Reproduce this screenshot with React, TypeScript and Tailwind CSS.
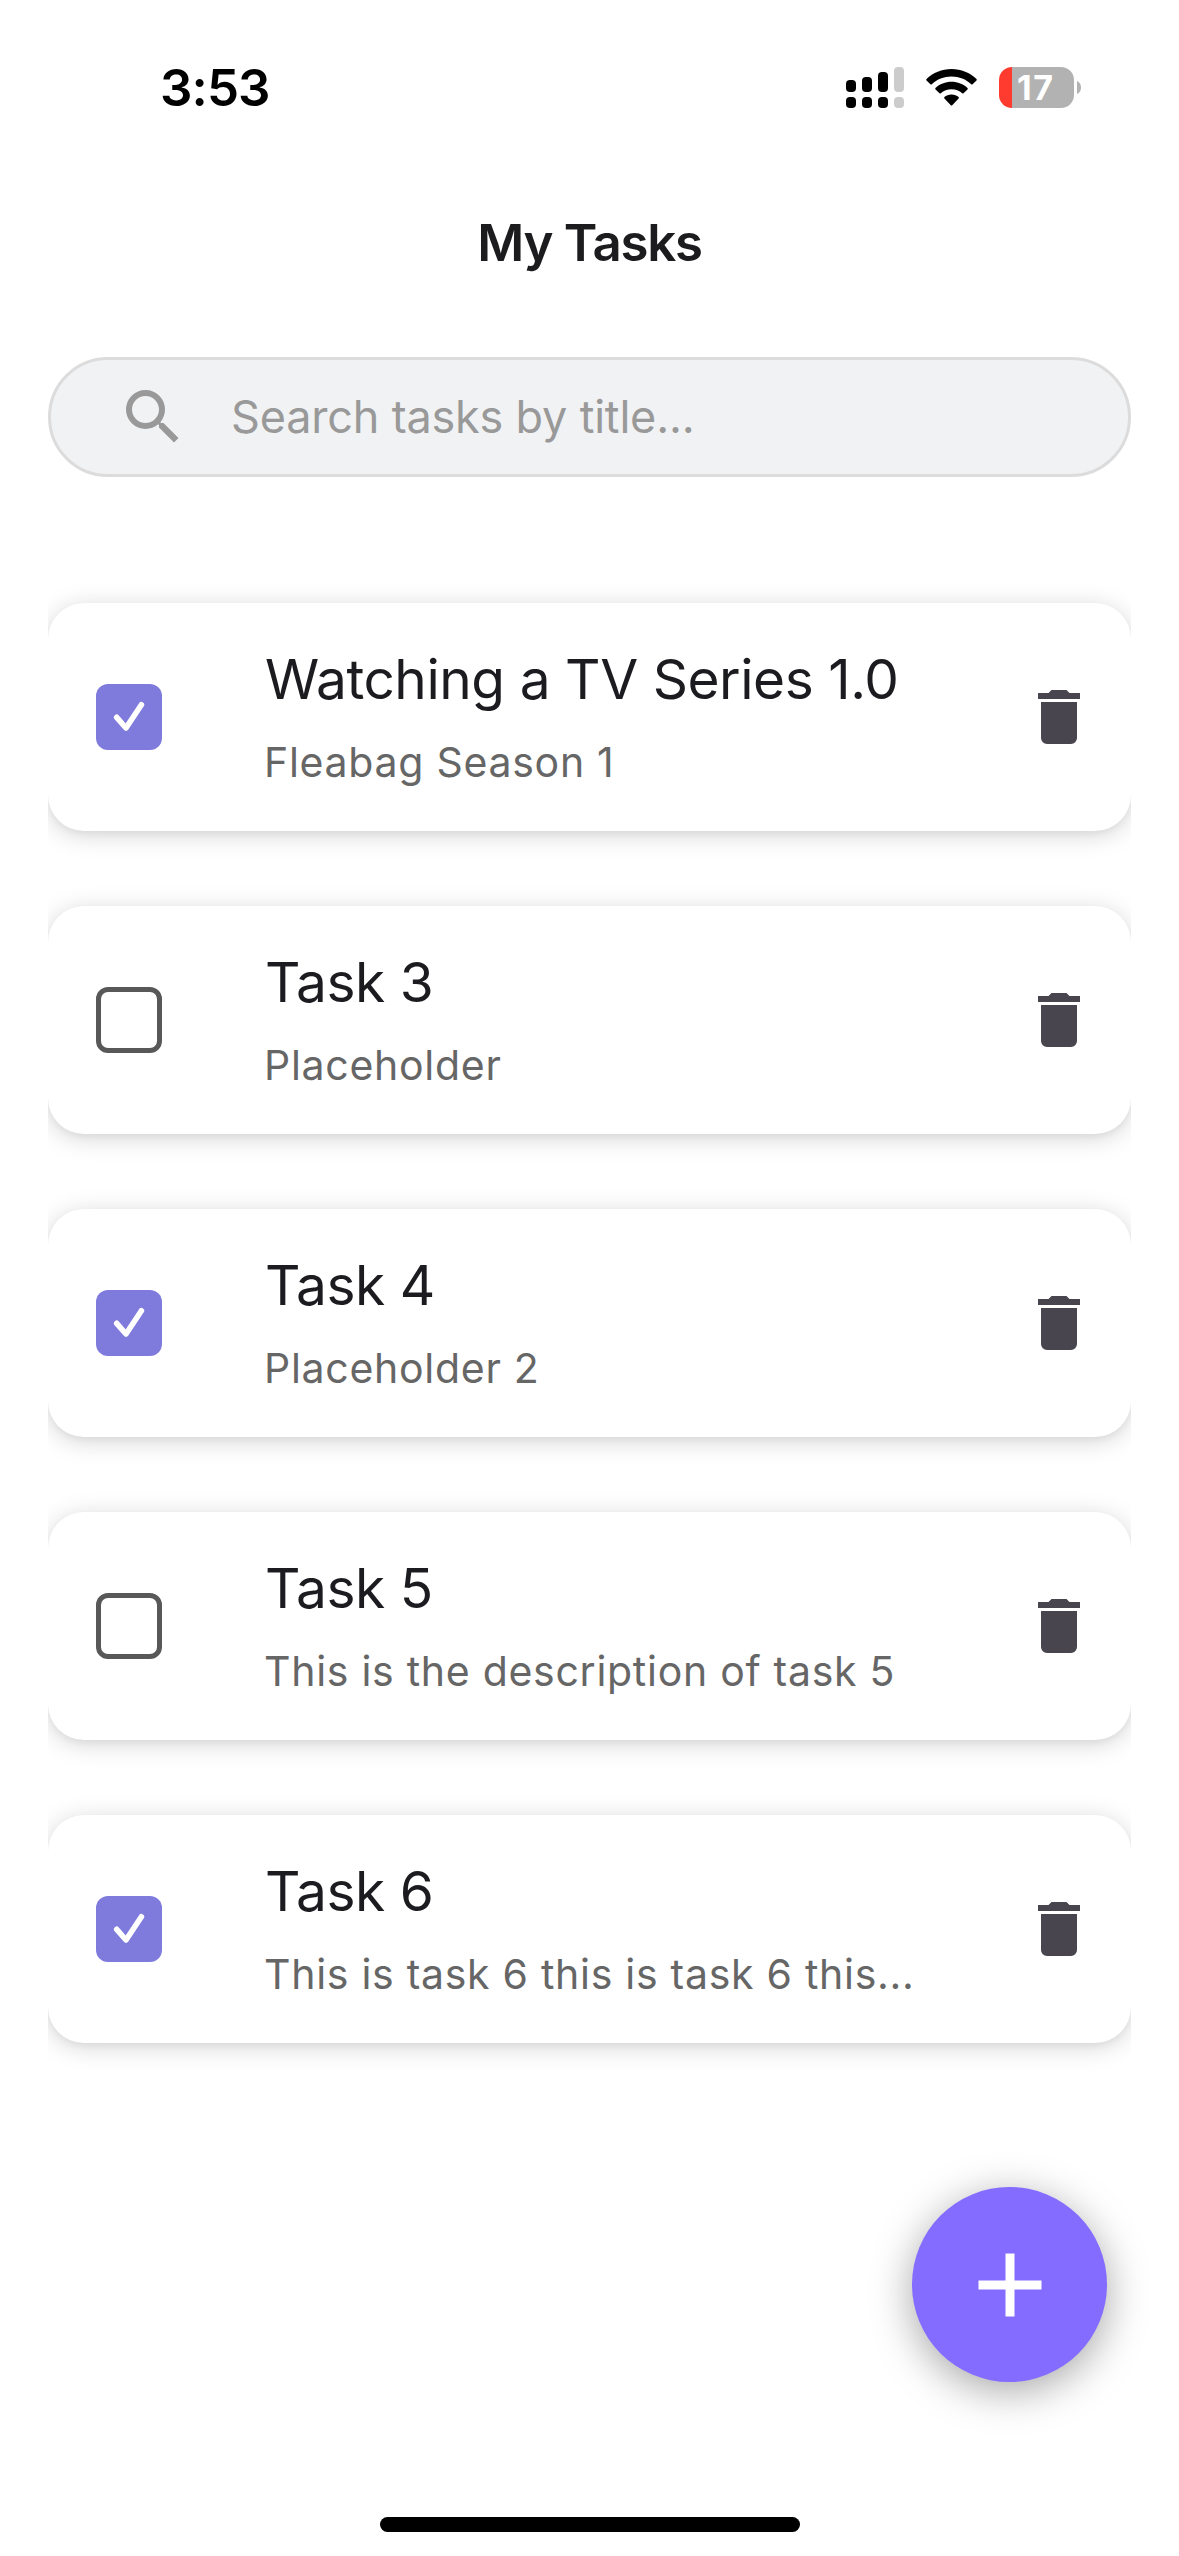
import { useState } from "react";

type Task = { id: number; title: string; description: string; done: boolean };

const initialTasks: Task[] = [
  { id: 1, title: "Watching a TV Series 1.0", description: "Fleabag Season 1", done: true },
  { id: 3, title: "Task 3", description: "Placeholder", done: false },
  { id: 4, title: "Task 4", description: "Placeholder 2", done: true },
  { id: 5, title: "Task 5", description: "This is the description of task 5", done: false },
  { id: 6, title: "Task 6", description: "This is task 6 this is task 6 this...", done: true },
];

function SignalIcon() {
  return (
    <svg width="58" height="41" viewBox="0 0 58 41">
      <rect x="0" y="13" width="10" height="12" rx="4" />
      <rect x="16" y="10" width="10" height="15" rx="4" />
      <rect x="32" y="5" width="10" height="20" rx="4" />
      <rect x="48" y="0" width="10" height="25" rx="4" fill="#cccccc" />
      <rect x="0" y="30" width="10" height="11" rx="4" />
      <rect x="16" y="30" width="10" height="11" rx="4" />
      <rect x="32" y="30" width="10" height="11" rx="4" />
      <rect x="48" y="30" width="10" height="11" rx="4" fill="#cccccc" />
    </svg>
  );
}

function WifiIcon() {
  return (
    <svg width="51" height="37" viewBox="0 0 51 37">
      <path d="M25.5 0C35.2 0 44 3.8 50.5 10C50.9 10.4 50.9 11 50.5 11.4L46.6 15.2C46.2 15.6 45.6 15.6 45.2 15.2C40 10.4 33.1 7.6 25.5 7.6C17.9 7.6 11 10.4 5.8 15.2C5.4 15.6 4.8 15.6 4.4 15.2L.5 11.4C.1 11 .1 10.4 .5 10C7 3.8 15.8 0 25.5 0Z" />
      <path d="M25.5 12.8C31.7 12.8 37.3 15.1 41.5 19C41.9 19.4 41.9 20 41.5 20.4L37.5 24.2C37.1 24.6 36.6 24.6 36.2 24.2C33.4 21.7 29.6 20.2 25.5 20.2C21.4 20.2 17.6 21.7 14.8 24.2C14.4 24.6 13.9 24.6 13.5 24.2L9.5 20.4C9.1 20 9.1 19.4 9.5 19C13.7 15.1 19.3 12.8 25.5 12.8Z" />
      <path d="M25.5 25.6C28.3 25.6 30.8 26.5 32.6 28.1C33 28.5 33 29.1 32.6 29.5L26.2 36.2C25.8 36.6 25.2 36.6 24.8 36.2L18.4 29.5C18 29.1 18 28.5 18.4 28.1C20.2 26.5 22.7 25.6 25.5 25.6Z" />
    </svg>
  );
}

function Battery() {
  return (
    <div className="flex items-center">
      <div className="flex h-[41px] w-[75px] items-center overflow-hidden rounded-[13px] bg-[linear-gradient(to_right,#ff3b30_13px,#b2b2b2_13px)] pl-[18px] text-[34px] leading-none font-bold tracking-[1.5px] text-white">
        17
      </div>
      <svg className="ml-[3px]" width="4" height="13" viewBox="0 0 4 13" fill="#b2b2b2">
        <path d="M0 0C2.5 1 4 3.5 4 6.5S2.5 12 0 13Z" />
      </svg>
    </div>
  );
}

function Checkbox({ checked, onToggle }: { checked: boolean; onToggle: () => void }) {
  return (
    <button type="button" role="checkbox" aria-checked={checked} onClick={onToggle} className="ml-12 size-[66px] shrink-0">
      {checked ? (
        <span className="block size-full rounded-xl bg-[#7f7bdd]">
          <svg viewBox="0 0 66 66" fill="none" stroke="#ffffff" strokeWidth="5.6" strokeLinecap="round" strokeLinejoin="round">
            <path d="M20.7 33.3L30 44L45.400 20.8" />
          </svg>
        </span>
      ) : (
        <span className="block size-full rounded-xl border-5 border-[#585858]" />
      )}
    </button>
  );
}

function TaskCard({ task, onToggle, onDelete }: { task: Task; onToggle: () => void; onDelete: () => void }) {
  return (
    <li className="flex h-[228px] items-center rounded-[36px] bg-white shadow-[0_4px_24px_rgba(0,0,0,0.17),0_3px_6px_rgba(0,0,0,0.04)]">
      <Checkbox checked={task.done} onToggle={onToggle} />
      <div className="ml-[102px] min-w-0 flex-1 pt-1.5 whitespace-nowrap">
        <h2 className="ml-px text-[55px] leading-[84px] tracking-[-0.45px] text-[#1c1b1f]">{task.title}</h2>
        <p className="text-[41px] leading-[82px] tracking-[0.72px] text-[#666666]">{task.description}</p>
      </div>
      <button type="button" aria-label="Delete" onClick={onDelete} className="mr-9 shrink-0">
        <svg width="72" height="72" viewBox="0 0 24 24" fill="#49454f">
          <path d="M19 4H15.5L14.5 3H9.5L8.5 4H5V6H19M6 19A2 2 0 0 0 8 21H16A2 2 0 0 0 18 19V7H6V19Z" />
        </svg>
      </button>
    </li>
  );
}

export default function App() {
  const [tasks, setTasks] = useState(initialTasks);
  const toggle = (id: number) => setTasks(tasks.map((t) => (t.id === id ? { ...t, done: !t.done } : t)));
  const remove = (id: number) => setTasks(tasks.filter((t) => t.id !== id));

  return (
    <div className="relative flex h-[2556px] w-[1179px] flex-col overflow-hidden bg-white font-['Inter',sans-serif]">
      <div className="flex h-[175px] shrink-0 items-center justify-between pr-[98px] pl-[160px]">
        <span className="pt-px text-[51px] font-semibold tracking-[-0.9px] text-black">3:53</span>
        <div className="flex items-center">
          <SignalIcon />
          <span className="mx-[22px]">
            <WifiIcon />
          </span>
          <Battery />
        </div>
      </div>

      <h1 className="flex h-[135px] shrink-0 items-center justify-center pt-0.5 text-[51px] font-semibold tracking-[-1.27px] text-[#1c1c1e]">
        My Tasks
      </h1>

      <label className="mx-12 mt-[47px] flex h-[120px] shrink-0 items-center rounded-full border-3 border-[#dcdcdc] bg-[#f1f2f4] pl-[66px]">
        <svg width="72" height="72" viewBox="0 0 24 24" fill="#999999">
          <path d="M9.5 3A6.5 6.5 0 0 1 16 9.5C16 11.110 15.410 12.590 14.440 13.730L14.710 14H15.5L20.5 19L19 20.5L14 15.5V14.710L13.730 14.440C12.590 15.410 11.110 16 9.5 16A6.5 6.5 0 0 1 3 9.5A6.5 6.5 0 0 1 9.5 3M9.5 5C7 5 5 7 5 9.5S7 14 9.5 14S14 12 14 9.5S12 5 9.5 5Z" />
        </svg>
        <span className="ml-[42px] pb-0.5 text-[45px] leading-none tracking-[-0.19px] text-[#999999]">Search tasks by title...</span>
      </label>

      <ul className="mx-12 mt-[63px] flex flex-col gap-[75px] overflow-hidden pt-[63px] pb-16">
        {tasks.map((task) => (
          <TaskCard key={task.id} task={task} onToggle={() => toggle(task.id)} onDelete={() => remove(task.id)} />
        ))}
      </ul>

      <button
        type="button"
        aria-label="Add task"
        className="absolute right-[72px] bottom-[174px] flex size-[195px] items-center justify-center rounded-full bg-[#836cff] shadow-[0_9px_42px_rgba(0,0,0,0.35)]"
      >
        <svg width="108" height="108" viewBox="0 0 24 24" fill="#ffffff">
          <path d="M19 13H13V19H11V13H5V11H11V5H13V11H19V13Z" />
        </svg>
      </button>

      <div className="mx-auto mt-auto mb-6 h-[15px] w-[420px] shrink-0 rounded-full bg-black" />
    </div>
  );
}
